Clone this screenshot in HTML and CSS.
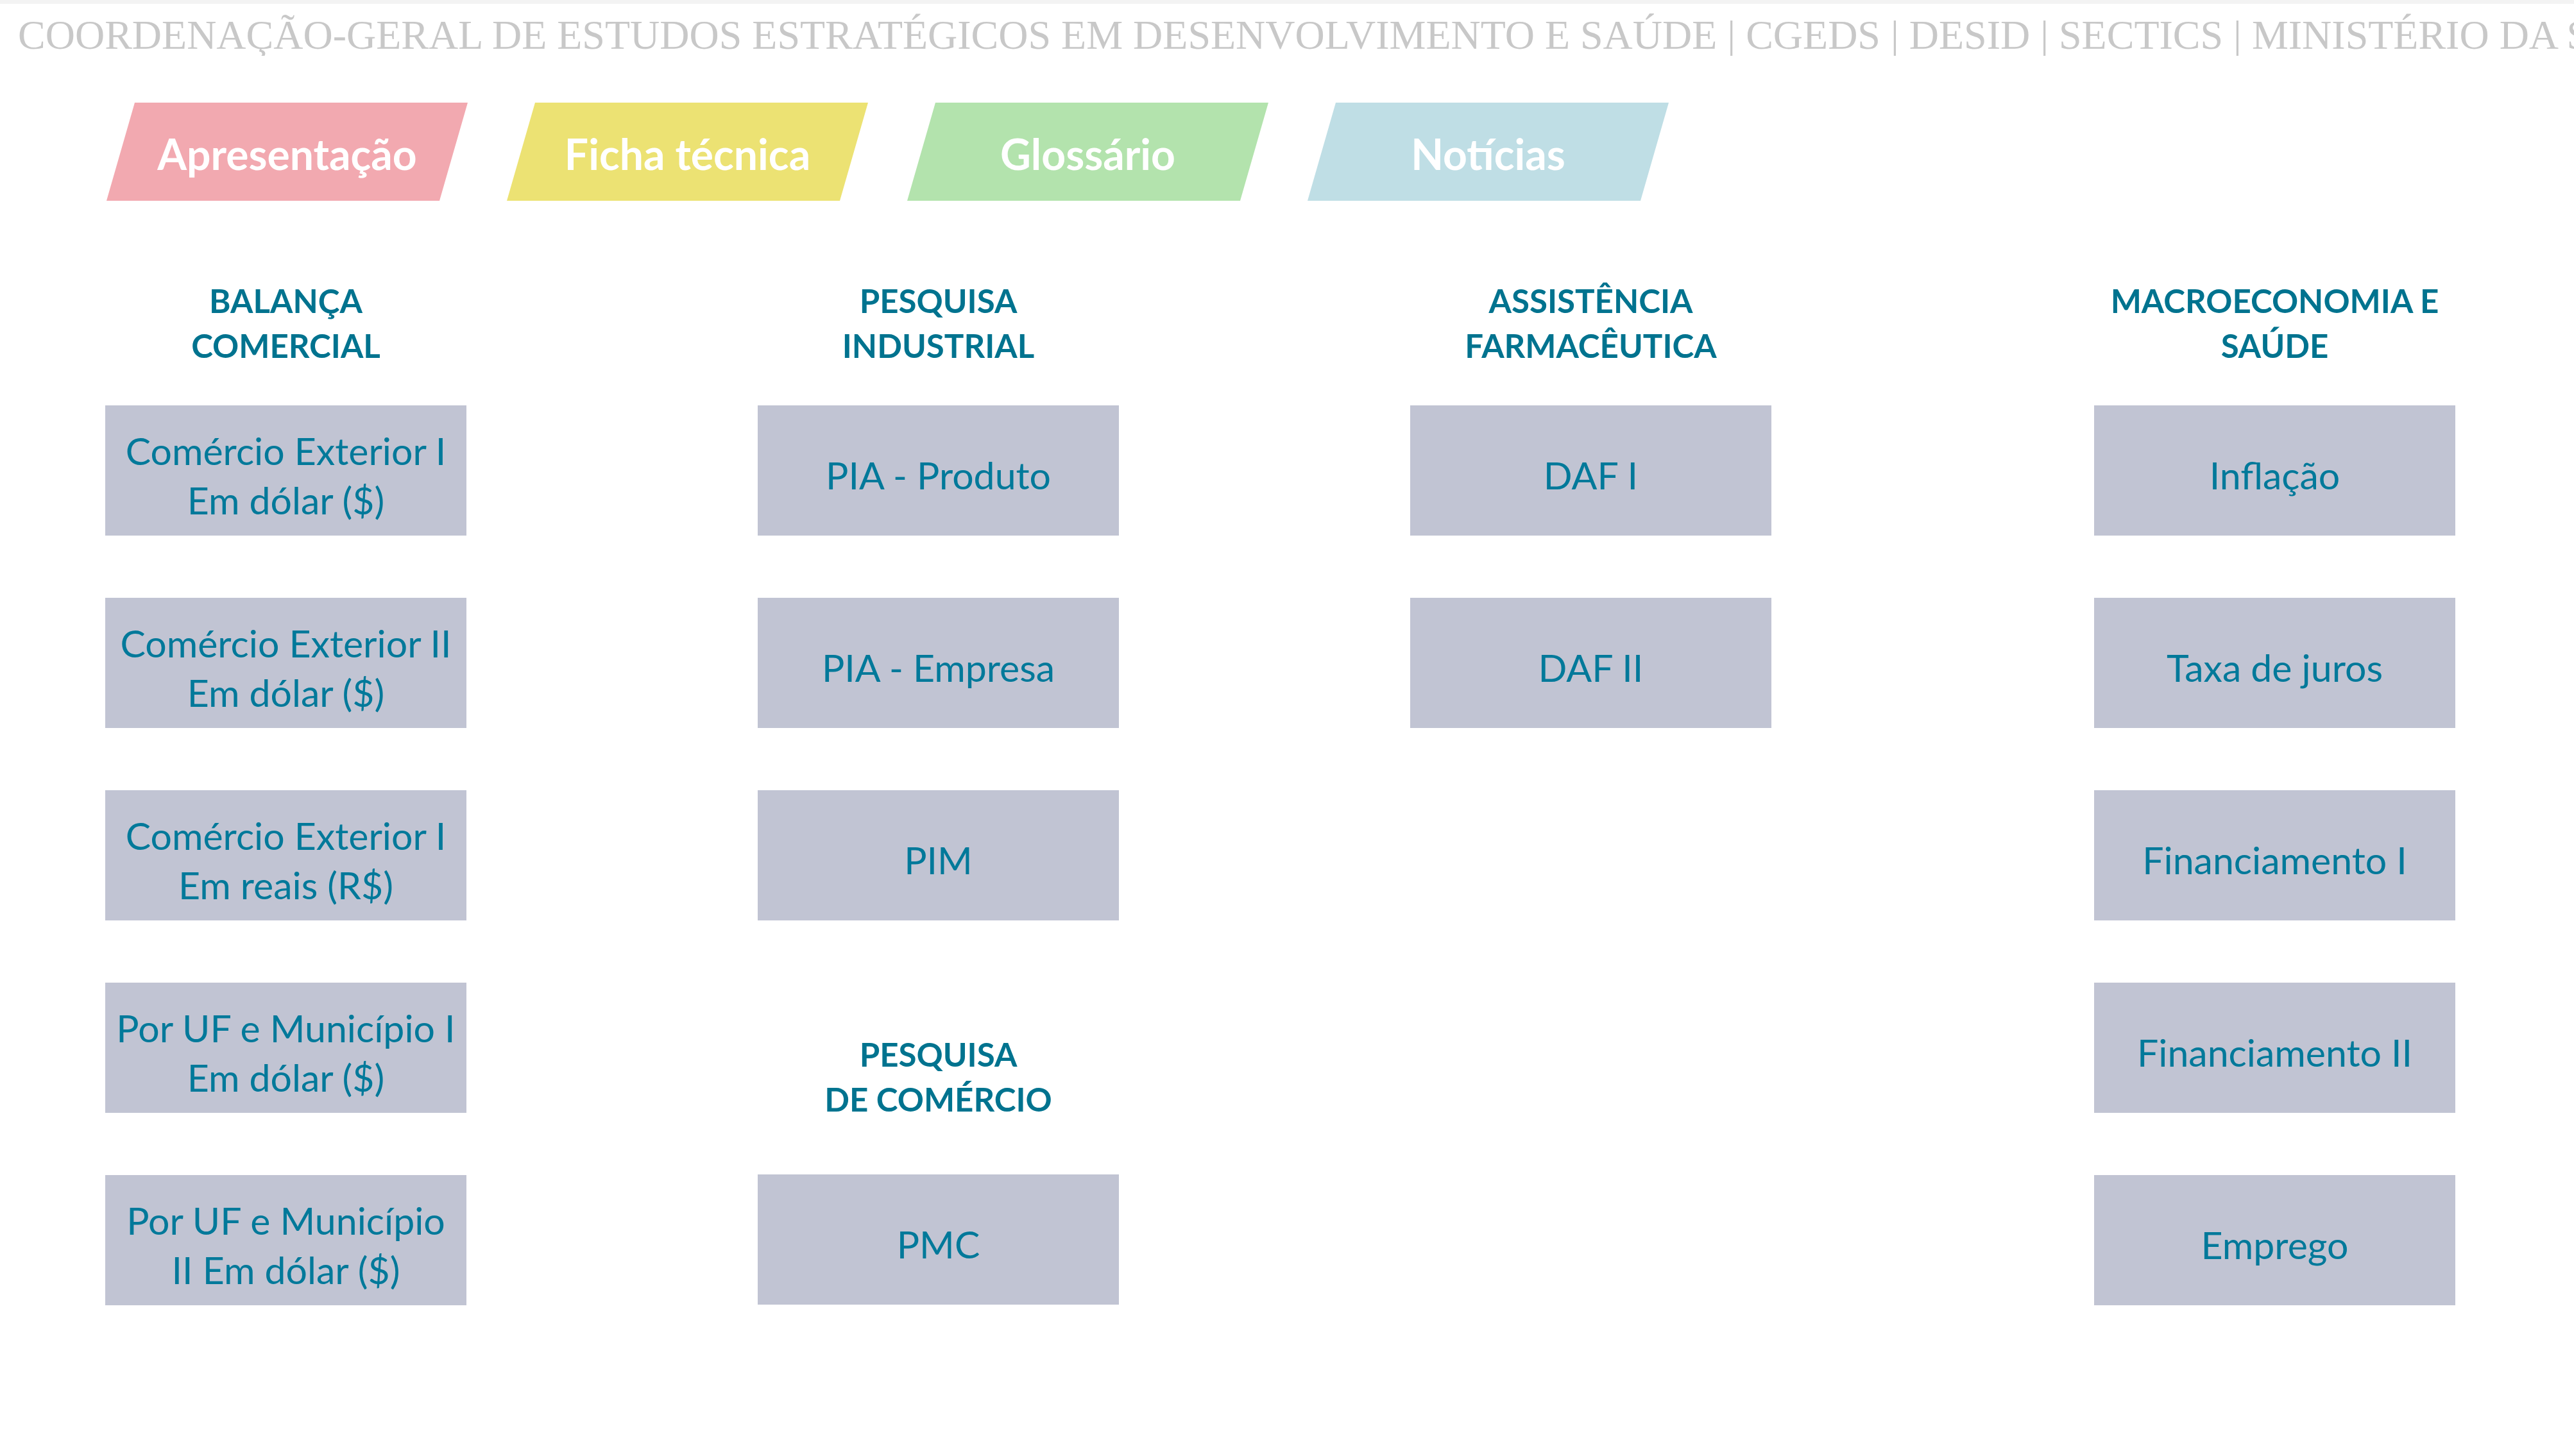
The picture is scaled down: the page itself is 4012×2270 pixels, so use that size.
FILE: index.html
```html
<!DOCTYPE html>
<html lang="pt-BR">
<head>
  <meta charset="UTF-8">
  <meta name="viewport" content="width=device-width, initial-scale=1.0">
  <title>CGEDS - Painéis</title>
  <link rel="stylesheet" href="styles.css">
</head>
<body>
  <div class="topbar"></div>
  <div class="title">COORDENAÇÃO-GERAL DE ESTUDOS ESTRATÉGICOS EM DESENVOLVIMENTO E SAÚDE | CGEDS | DESID | SECTICS | MINISTÉRIO DA SAÚDE</div>

  <nav class="tabs">
    <a class="tab tab-pink" href="#">Apresentação</a>
    <a class="tab tab-yellow" href="#">Ficha técnica</a>
    <a class="tab tab-green" href="#">Glossário</a>
    <a class="tab tab-blue" href="#">Notícias</a>
  </nav>

  <main class="grid">
    <section class="col">
      <h2 class="col-title">BALANÇA<br>COMERCIAL</h2>
      <a class="tile" href="#">Comércio Exterior I<br>Em dólar ($)</a>
      <a class="tile" href="#">Comércio Exterior II<br>Em dólar ($)</a>
      <a class="tile" href="#">Comércio Exterior I<br>Em reais (R$)</a>
      <a class="tile" href="#">Por UF e Município I<br>Em dólar ($)</a>
      <a class="tile" href="#">Por UF e Município<br>II Em dólar ($)</a>
    </section>

    <section class="col">
      <h2 class="col-title">PESQUISA<br>INDUSTRIAL</h2>
      <a class="tile" href="#">PIA - Produto</a>
      <a class="tile" href="#">PIA - Empresa</a>
      <a class="tile" href="#">PIM</a>
      <h2 class="col-title sub">PESQUISA<br>DE COMÉRCIO</h2>
      <a class="tile" href="#">PMC</a>
    </section>

    <section class="col">
      <h2 class="col-title">ASSISTÊNCIA<br>FARMACÊUTICA</h2>
      <a class="tile" href="#">DAF I</a>
      <a class="tile" href="#">DAF II</a>
    </section>

    <section class="col col-last">
      <h2 class="col-title">MACROECONOMIA E<br>SAÚDE</h2>
      <a class="tile" href="#">Inflação</a>
      <a class="tile" href="#">Taxa de juros</a>
      <a class="tile" href="#">Financiamento I</a>
      <a class="tile" href="#">Financiamento II</a>
      <a class="tile" href="#">Emprego</a>
    </section>
  </main>
</body>
</html>
```

FILE: styles.css
```css
body {
  margin: 0;
  background: #ffffff;
  font-family: Lato, 'Open Sans', 'Noto Sans', sans-serif;
}
.topbar {
  height: 6px;
  background: #f3f3f3;
}
.title {
  font-family: 'Liberation Serif', 'Times New Roman', serif;
  font-size: 64px;
  line-height: 65px;
  color: #c8c8c8;
  padding: 16px 0 0 28px;
  white-space: nowrap;
  overflow: hidden;
}
.tabs {
  display: flex;
  gap: 61px;
  padding-left: 166px;
  margin-top: 73px;
}
.tab {
  width: 563px;
  height: 153px;
  box-sizing: border-box;
  padding-top: 6px;
  display: flex;
  align-items: center;
  justify-content: center;
  clip-path: polygon(44px 0, 100% 0, calc(100% - 44px) 100%, 0 100%);
  color: #ffffff;
  font-weight: 700;
  font-size: 66px;
  text-decoration: none;
}
.tab-pink { background: #f2a9b0; }
.tab-yellow { background: #ece273; }
.tab-green { background: #b3e3ad; }
.tab-blue { background: #bfdee5; }
.grid {
  display: flex;
  align-items: flex-start;
  padding-left: 164px;
  margin-top: 121px;
}
.col {
  width: 563px;
  display: flex;
  flex-direction: column;
  margin-right: 454px;
}
.col-last {
  margin-left: 49px;
  margin-right: 0;
}
.col-title {
  margin: 0 0 58px;
  height: 140px;
  font-size: 51px;
  line-height: 70px;
  font-weight: 700;
  color: #00738f;
  text-align: center;
}
.col-title.sub {
  margin-top: 77px;
  margin-bottom: 82px;
}
.tile {
  height: 203px;
  box-sizing: border-box;
  padding-top: 14px;
  margin-bottom: 97px;
  display: flex;
  align-items: center;
  justify-content: center;
  text-align: center;
  background: #c1c4d3;
  color: #00799a;
  font-size: 59px;
  line-height: 77px;
  text-decoration: none;
}
```
